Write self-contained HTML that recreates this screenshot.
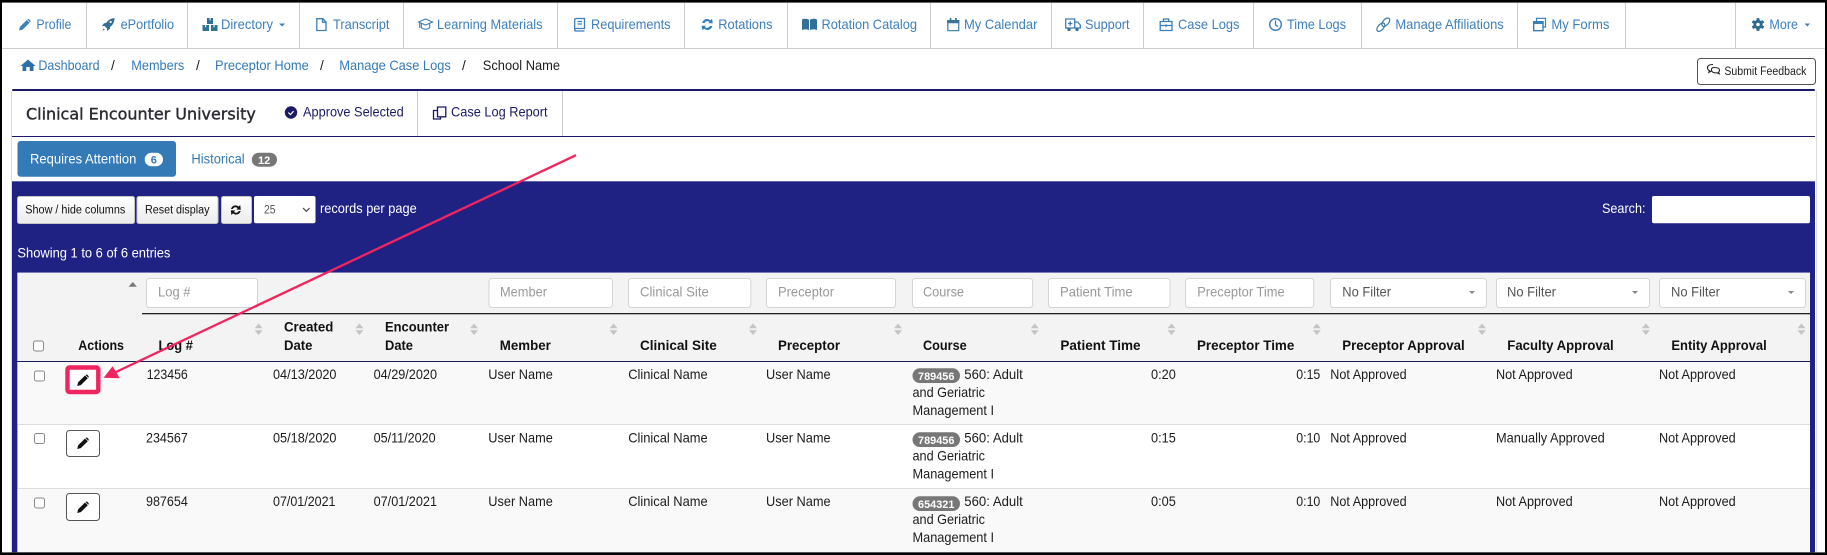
<!DOCTYPE html>
<html lang="en"><head><meta charset="utf-8"><title>Manage Case Logs</title>
<style>
html,body{margin:0;padding:0;background:#fff;width:1827px;height:555px;overflow:hidden}
svg{display:block;filter:blur(.3px)}
text{font-family:"Liberation Sans",Arial,sans-serif;font-size:13.6px;white-space:pre}
.n{fill:#3d7fbd}.l{fill:#337ab7}.d{fill:#1c1c1c}.w{fill:#fff}.p{fill:#999}.b{fill:#111;font-weight:700}.v{fill:#1a1a66}.s{font-size:11.5px;fill:#222}
.bg{fill:#fff;font-weight:700;font-size:11px}
.ic{fill:none;stroke:#3a7fb8;stroke-width:1.3}.if{fill:#2f7199}
.inp{fill:#fff;stroke:#d4d4d4;stroke-width:1}
.so{fill:#c4c4c4}
.cb{fill:#fff;stroke:#8a8a8a;stroke-width:1}
.eb{fill:#fff;stroke:#555;stroke-width:1}
</style></head><body>
<svg xmlns="http://www.w3.org/2000/svg" width="1827" height="555" viewBox="0 0 1827 555">
<defs>
<path id="pen" d="M0 12 L.9 8.4 L7.8 1.5 L10.6 4.3 L3.6 11.1 Z M8.3 1 Q9.3 0 10.3 1 L11.1 1.8 Q12 2.8 11.1 3.8 Z"/>
<g id="sort"><path class="so" d="M0 4.7 L4 0 L8 4.7 Z M0 6.8 L8 6.8 L4 11.5 Z"/></g>
</defs>
<rect width="1827" height="555" fill="#fff"/>

<!-- nav -->
<rect x="2" y="48" width="1823" height="1" fill="#ccc"/>
<g fill="#ccc">
<rect x="86" y="3" width="1" height="45"/><rect x="187" y="3" width="1" height="45"/><rect x="299" y="3" width="1" height="45"/><rect x="403" y="3" width="1" height="45"/><rect x="557" y="3" width="1" height="45"/><rect x="684" y="3" width="1" height="45"/><rect x="787" y="3" width="1" height="45"/><rect x="930" y="3" width="1" height="45"/><rect x="1051" y="3" width="1" height="45"/><rect x="1143" y="3" width="1" height="45"/><rect x="1253" y="3" width="1" height="45"/><rect x="1361" y="3" width="1" height="45"/><rect x="1517" y="3" width="1" height="45"/><rect x="1625" y="3" width="1" height="45"/><rect x="1735" y="3" width="1" height="45"/>
</g>
<text class="n" x="36.4" y="29" textLength="35" lengthAdjust="spacingAndGlyphs">Profile</text>
<text class="n" x="120.6" y="29" textLength="53.5" lengthAdjust="spacingAndGlyphs">ePortfolio</text>
<text class="n" x="221" y="29" textLength="52" lengthAdjust="spacingAndGlyphs">Directory</text>
<text class="n" x="333" y="29" textLength="56.5" lengthAdjust="spacingAndGlyphs">Transcript</text>
<text class="n" x="437" y="29" textLength="105.5" lengthAdjust="spacingAndGlyphs">Learning Materials</text>
<text class="n" x="591" y="29" textLength="79.5" lengthAdjust="spacingAndGlyphs">Requirements</text>
<text class="n" x="718.3" y="29" textLength="54.2" lengthAdjust="spacingAndGlyphs">Rotations</text>
<text class="n" x="821.5" y="29" textLength="95.5" lengthAdjust="spacingAndGlyphs">Rotation Catalog</text>
<text class="n" x="964" y="29" textLength="73.4" lengthAdjust="spacingAndGlyphs">My Calendar</text>
<text class="n" x="1085" y="29" textLength="44.6" lengthAdjust="spacingAndGlyphs">Support</text>
<text class="n" x="1178" y="29" textLength="61.5" lengthAdjust="spacingAndGlyphs">Case Logs</text>
<text class="n" x="1287" y="29" textLength="59" lengthAdjust="spacingAndGlyphs">Time Logs</text>
<text class="n" x="1395.4" y="29" textLength="108.4" lengthAdjust="spacingAndGlyphs">Manage Affiliations</text>
<text class="n" x="1551.4" y="29" textLength="58" lengthAdjust="spacingAndGlyphs">My Forms</text>
<text class="n" x="1769.4" y="29" textLength="28.6" lengthAdjust="spacingAndGlyphs">More</text>
<!-- nav icons -->
<use href="#pen" x="19" y="18.5" fill="#3a7fb8"/>
<path d="M114.5 18 Q109 18.5 106 23 L104 23.2 L102 26 L104.6 26 L107 28.6 L107 31 L110 28.8 L110 27 Q114.5 24 114.5 18 Z M103.5 28.5 L102.5 30.8 L104.8 29.8 Z" fill="#2f6f99"/>
<circle cx="110.6" cy="22" r="1.1" fill="#fff"/>
<path class="if" d="M207 18 h2.6 v2.4 h1 V18 H213 v6 h-6 Z M202.5 25 h2.6 v2.2 h1 V25 H209 v6 h-6.5 Z M211 25 h2.6 v2.2 h1 V25 h2.9 v6 H211 Z"/>
<path class="ic" d="M316.8 18.7 h6 l3.2 3.2 v8.6 h-9.2 Z M322.5 18.7 v3.5 h3.5"/>
<path d="M418.6 22 L425.5 19 L432.6 22 L425.5 25 Z M421.3 23.5 v4.2 q4.2 3 8.4 0 v-4.2 M419.7 22.5 v5.5" fill="none" stroke="#3a7fb8" stroke-width="1.1"/>
<path class="ic" d="M574.7 20 q0-1.5 1.5-1.5 h8.3 v10 h-8.3 q-1.5 0 -1.5 1.2 q0 1.3 1.5 1.3 h8.3 M574.7 30 v-10 M577.5 21.5 h4.5 M577.5 24 h4.5" fill="none"/>
<path d="M702.2 23 a5 5 0 0 1 8.3 -2.6 L712 18.8 L712.8 23.3 L708.3 23.3 L709.6 22 a3.3 3.3 0 0 0 -5.2 1 Z M712.3 26 a5 5 0 0 1 -8.3 2.6 L702.4 30.2 L701.6 25.7 L706.1 25.7 L704.8 27 a3.3 3.3 0 0 0 5.2 -1 Z" fill="#2f7fbb"/>
<path class="if" d="M802 19.5 Q805.5 18 809 19.6 V30 Q805.5 28.8 802 30 Z M810 19.6 Q813.5 18 817 19.5 V30 Q813.5 28.8 810 30 Z"/>
<path d="M947.8 20.6 h10.9 v10 h-10.9 Z" fill="none" stroke="#4a86ad" stroke-width="1.3"/><path d="M947.2 20 h12 v3.3 h-12 Z M949.7 18 h1.7 v3 h-1.7 Z M955.1 18 h1.7 v3 h-1.7 Z" fill="#3a7599"/>
<path d="M1065.7 19 h9 v9 h-9 Z M1074.7 22 h3 l2.6 3 v3 h-5.6 Z M1068 23.5 h4.4 M1070.2 21.3 v4.4" fill="none" stroke="#3a7fb8" stroke-width="1.3"/><circle cx="1069" cy="29.5" r="1.6" fill="#2f7199"/><circle cx="1077" cy="29.5" r="1.6" fill="#2f7199"/>
<path d="M1160.2 21.5 h11.8 v9 h-11.8 Z M1163.5 21.5 v-2.5 h5.2 v2.5 M1160.2 25.5 h11.8" fill="none" stroke="#3a7fb8" stroke-width="1.3"/><rect x="1165" y="24.6" width="2.2" height="2" fill="#3a7fb8"/>
<circle cx="1275.5" cy="24.5" r="5.8" fill="none" stroke="#3a7fb8" stroke-width="1.4"/><path d="M1275.5 20.5 v4.4 l2.6 1.8" fill="none" stroke="#3a7fb8" stroke-width="1.3"/>
<g fill="none" stroke="#3f7ca8" stroke-width="1.2"><ellipse cx="1380.8" cy="27.2" rx="5" ry="2.8" transform="rotate(-48 1380.8 27.2)"/><ellipse cx="1385.8" cy="22.2" rx="5" ry="2.8" transform="rotate(-48 1385.8 22.2)"/></g>
<path d="M1533.7 21.7 h9.3 v9 h-9.3 Z" fill="none" stroke="#3a7fb8" stroke-width="1.4"/><rect x="1533.2" y="21" width="10.4" height="3" fill="#3a7fb8"/><path d="M1536.5 21 v-2.7 h9 v8.7 h-2.2" fill="none" stroke="#3a7fb8" stroke-width="1.2"/>
<g transform="translate(1758 24.5)" fill="#2a6a8f"><circle r="4.6"/><g><rect x="-1.5" y="-6.4" width="3" height="12.8" rx=".6"/><rect x="-1.5" y="-6.4" width="3" height="12.8" rx=".6" transform="rotate(60)"/><rect x="-1.5" y="-6.4" width="3" height="12.8" rx=".6" transform="rotate(120)"/></g><circle r="1.8" fill="#fff"/></g>
<path d="M279 23.5 h6 l-3 3 Z M1804.6 23.5 h5.4 l-2.7 3 Z" fill="#3d7fbd"/>

<!-- breadcrumb -->
<path d="M28 59.5 L20.5 66 L22.5 66 L22.5 71 L26.3 71 L26.3 67 L29.7 67 L29.7 71 L33.5 71 L33.5 66 L35.6 66 Z" fill="#2f6fa8"/>
<text class="l" x="38.4" y="70" textLength="61.2" lengthAdjust="spacingAndGlyphs">Dashboard</text>
<text class="d" x="111" y="70">/</text>
<text class="l" x="131.3" y="70" textLength="53" lengthAdjust="spacingAndGlyphs">Members</text>
<text class="d" x="196" y="70">/</text>
<text class="l" x="215" y="70" textLength="93.8" lengthAdjust="spacingAndGlyphs">Preceptor Home</text>
<text class="d" x="320" y="70">/</text>
<text class="l" x="339.3" y="70" textLength="111.5" lengthAdjust="spacingAndGlyphs">Manage Case Logs</text>
<text class="d" x="462" y="70">/</text>
<text class="d" x="482.8" y="70" textLength="77.2" lengthAdjust="spacingAndGlyphs">School Name</text>

<rect x="1697.5" y="58.5" width="118" height="26" rx="3" fill="#fff" stroke="#555"/>
<path d="M1713 64.5 q-5.5 0 -5.5 3.2 q0 2 2 3 l-.6 1.6 l2.5 -1.3 M1714 67.5 q5.5 0 5.5 2.6 q0 1.5 -1 2.2 l.8 1.5 l-2.4 -1 q-5 .5 -5.5 -2.7 q0 -2.6 2.6 -2.6 Z" fill="none" stroke="#222" stroke-width="1.1"/>
<text class="s" x="1724.4" y="75" textLength="82" lengthAdjust="spacingAndGlyphs">Submit Feedback</text>

<!-- card -->
<rect x="11" y="91" width="1" height="462" fill="#ddd"/><rect x="1816" y="91" width="1" height="462" fill="#ddd"/>
<rect x="12" y="89" width="1803" height="2" rx="1" fill="#1a1a66"/>
<rect x="12" y="136" width="1803" height="1" fill="#1a1a66"/>
<rect x="417" y="91" width="1" height="45" fill="#ccc"/><rect x="562" y="91" width="1" height="45" fill="#ccc"/>
<text x="26" y="119.3" textLength="229.8" lengthAdjust="spacingAndGlyphs" style="font-family:'DejaVu Sans',sans-serif;font-size:16px;fill:#2b2b33;stroke:#2b2b33;stroke-width:.4">Clinical Encounter University</text>
<circle cx="291" cy="112.5" r="6.2" fill="#1a1a66"/><path d="M288.4 112.6 l2 2 l3.2 -3.4" fill="none" stroke="#fff" stroke-width="1.2"/>
<text class="v" x="303" y="116.7" textLength="100.7" lengthAdjust="spacingAndGlyphs">Approve Selected</text>
<path d="M437 110.5 h-3.5 v8.5 h7 v-2.2 M437.5 107 h8.3 v9.8 h-8.3 Z" fill="none" stroke="#1a1a66" stroke-width="1.3"/>
<text class="v" x="451" y="116.7" textLength="96.6" lengthAdjust="spacingAndGlyphs">Case Log Report</text>

<!-- tabs -->
<rect x="17.5" y="141" width="158.5" height="35.7" rx="3" fill="#337ab7"/>
<text class="w" x="30" y="163.3" textLength="106.4" lengthAdjust="spacingAndGlyphs">Requires Attention</text>
<rect x="144.7" y="152.7" width="18.3" height="13.6" rx="6.8" fill="#fff"/>
<text x="150.8" y="163.6" style="font-size:11px;font-weight:700;fill:#337ab7">6</text>
<text class="l" x="191.4" y="163.3" textLength="53.3" lengthAdjust="spacingAndGlyphs">Historical</text>
<rect x="251.8" y="152.7" width="25.2" height="14" rx="7" fill="#777"/>
<text class="bg" x="258" y="163.8">12</text>

<!-- navy panel -->
<rect x="12" y="181.3" width="1803" height="371" fill="#1f2183"/>
<defs><linearGradient id="g" x1="0" y1="0" x2="0" y2="1"><stop offset="0" stop-color="#fff"/><stop offset="1" stop-color="#ebebeb"/></linearGradient></defs>
<g fill="url(#g)" stroke="#c5c5c5">
<rect x="17.5" y="196.5" width="117" height="27" rx="2"/><rect x="137" y="196.5" width="81" height="27" rx="2"/><rect x="221.5" y="196.5" width="30" height="27" rx="2"/>
</g>
<text class="s" x="25.3" y="213.3" textLength="100" lengthAdjust="spacingAndGlyphs" style="fill:#111">Show / hide columns</text>
<text class="s" x="145" y="213.3" textLength="64.5" lengthAdjust="spacingAndGlyphs" style="fill:#111">Reset display</text>
<path d="M231 209 a4.6 4.6 0 0 1 7.6 -2.4 L240.2 205 L240.8 209.6 L236.4 209.6 L237.6 208.2 a2.9 2.9 0 0 0 -4.8 .8 Z M240.6 211 a4.6 4.6 0 0 1 -7.6 2.4 L231.4 215 L230.8 210.4 L235.2 210.4 L234 211.8 a2.9 2.9 0 0 0 4.8 -.8 Z" fill="#111"/>
<rect x="254" y="196" width="61.5" height="27.3" rx="2" fill="#fff"/>
<text x="264" y="213.3" textLength="11.6" lengthAdjust="spacingAndGlyphs" style="font-size:12px;fill:#555">25</text>
<path d="M303 208 l3.3 3.3 l3.3 -3.3" fill="none" stroke="#444" stroke-width="1.2"/>
<text class="w" x="320" y="213" textLength="96.7" lengthAdjust="spacingAndGlyphs">records per page</text>
<text class="w" x="1602" y="213" textLength="43.5" lengthAdjust="spacingAndGlyphs">Search:</text>
<rect x="1652" y="196" width="158" height="27.3" rx="2" fill="#fff"/>
<text class="w" x="17.4" y="257.7" textLength="153" lengthAdjust="spacingAndGlyphs">Showing 1 to 6 of 6 entries</text>

<!-- table -->
<rect x="17.4" y="272.7" width="1792.6" height="279.5" fill="#fff"/>
<rect x="17.4" y="272.7" width="1792.6" height="88.6" fill="#f3f3f3"/>
<rect x="17.4" y="361.8" width="1792.6" height="62.5" fill="#f9f9f9"/>
<rect x="17.4" y="488.7" width="1792.6" height="63.5" fill="#f9f9f9"/>
<rect x="17.4" y="424" width="1792.6" height="1" fill="#ddd"/><rect x="17.4" y="488" width="1792.6" height="1" fill="#ddd"/>
<rect x="142" y="313" width="1668" height="1.3" fill="#222"/>
<rect x="17.4" y="361" width="1792.6" height="1" fill="#1a1a55"/>
<path d="M128.5 286.7 L132.8 282 L137 286.7 Z" fill="#777"/>

<!-- filters -->
<rect class="inp" x="146.5" y="278.5" width="111" height="29" rx="3"/>
<rect class="inp" x="489" y="278.5" width="123.5" height="29" rx="3"/>
<rect class="inp" x="628.5" y="278.5" width="122.3" height="29" rx="3"/>
<rect class="inp" x="766.5" y="278.5" width="129" height="29" rx="3"/>
<rect class="inp" x="912.5" y="278.5" width="120.2" height="29" rx="3"/>
<rect class="inp" x="1048.5" y="278.5" width="121.5" height="29" rx="3"/>
<rect class="inp" x="1185.5" y="278.5" width="128.2" height="29" rx="3"/>
<rect class="inp" x="1330.5" y="278.5" width="156" height="29" rx="3"/>
<rect class="inp" x="1496.5" y="278.5" width="153" height="29" rx="3"/>
<rect class="inp" x="1659.5" y="278.5" width="146" height="29" rx="3"/>
<text class="p" x="158" y="296.7" textLength="32.5" lengthAdjust="spacingAndGlyphs">Log #</text>
<text class="p" x="500" y="296.7" textLength="47" lengthAdjust="spacingAndGlyphs">Member</text>
<text class="p" x="640" y="296.7" textLength="68.8" lengthAdjust="spacingAndGlyphs">Clinical Site</text>
<text class="p" x="778" y="296.7" textLength="56" lengthAdjust="spacingAndGlyphs">Preceptor</text>
<text class="p" x="923" y="296.7" textLength="41" lengthAdjust="spacingAndGlyphs">Course</text>
<text class="p" x="1060" y="296.7" textLength="72.7" lengthAdjust="spacingAndGlyphs">Patient Time</text>
<text class="p" x="1197.2" y="296.7" textLength="87.5" lengthAdjust="spacingAndGlyphs">Preceptor Time</text>
<text x="1342.3" y="296.7" textLength="48.7" lengthAdjust="spacingAndGlyphs" fill="#555">No Filter</text>
<text x="1507" y="296.7" textLength="49" lengthAdjust="spacingAndGlyphs" fill="#555">No Filter</text>
<text x="1671" y="296.7" textLength="49" lengthAdjust="spacingAndGlyphs" fill="#555">No Filter</text>
<path d="M1469 291 h6 l-3 3 Z M1632 291 h6 l-3 3 Z M1788 291 h6 l-3 3 Z" fill="#888"/>

<!-- headers -->
<rect class="cb" x="33.5" y="341" width="10" height="10" rx="2"/>
<text class="b" x="78.3" y="350" textLength="45.7" lengthAdjust="spacingAndGlyphs">Actions</text>
<text class="b" x="158.5" y="350" textLength="34.5" lengthAdjust="spacingAndGlyphs">Log #</text>
<text class="b" x="284" y="331.7" textLength="49.3" lengthAdjust="spacingAndGlyphs">Created</text>
<text class="b" x="284" y="350" textLength="28.4" lengthAdjust="spacingAndGlyphs">Date</text>
<text class="b" x="385" y="331.7" textLength="64" lengthAdjust="spacingAndGlyphs">Encounter</text>
<text class="b" x="385" y="350" textLength="28" lengthAdjust="spacingAndGlyphs">Date</text>
<text class="b" x="499.8" y="350" textLength="51" lengthAdjust="spacingAndGlyphs">Member</text>
<text class="b" x="640" y="350" textLength="76.8" lengthAdjust="spacingAndGlyphs">Clinical Site</text>
<text class="b" x="778" y="350" textLength="62" lengthAdjust="spacingAndGlyphs">Preceptor</text>
<text class="b" x="923" y="350" textLength="43.7" lengthAdjust="spacingAndGlyphs">Course</text>
<text class="b" x="1060.4" y="350" textLength="80.2" lengthAdjust="spacingAndGlyphs">Patient Time</text>
<text class="b" x="1197" y="350" textLength="97.3" lengthAdjust="spacingAndGlyphs">Preceptor Time</text>
<text class="b" x="1342.3" y="350" textLength="122.4" lengthAdjust="spacingAndGlyphs">Preceptor Approval</text>
<text class="b" x="1507.3" y="350" textLength="106.4" lengthAdjust="spacingAndGlyphs">Faculty Approval</text>
<text class="b" x="1671.4" y="350" textLength="95.3" lengthAdjust="spacingAndGlyphs">Entity Approval</text>
<use href="#sort" x="254.6" y="323.5"/><use href="#sort" x="355.4" y="323.5"/><use href="#sort" x="470" y="323.5"/><use href="#sort" x="609.6" y="323.5"/><use href="#sort" x="749" y="323.5"/><use href="#sort" x="894" y="323.5"/><use href="#sort" x="1030.7" y="323.5"/><use href="#sort" x="1167.5" y="323.5"/><use href="#sort" x="1312.8" y="323.5"/><use href="#sort" x="1478" y="323.5"/><use href="#sort" x="1641.9" y="323.5"/><use href="#sort" x="1797.5" y="323.5"/>

<!-- row 1 -->
<rect class="cb" x="34.5" y="371" width="10" height="10" rx="2"/>
<rect x="67.5" y="367.5" width="30.8" height="24.5" rx="2" fill="#fff" stroke="#f0245f" stroke-width="4.4"/>
<use href="#pen" x="77.2" y="374" fill="#111"/>
<text class="d" x="146.7" y="379" textLength="41.1" lengthAdjust="spacingAndGlyphs">123456</text>
<text class="d" x="273" y="379" textLength="63.5" lengthAdjust="spacingAndGlyphs">04/13/2020</text>
<text class="d" x="373.6" y="379" textLength="63.4" lengthAdjust="spacingAndGlyphs">04/29/2020</text>
<text class="d" x="488.3" y="379" textLength="64.5" lengthAdjust="spacingAndGlyphs">User Name</text>
<text class="d" x="628.2" y="379" textLength="79.5" lengthAdjust="spacingAndGlyphs">Clinical Name</text>
<text class="d" x="766" y="379" textLength="64.6" lengthAdjust="spacingAndGlyphs">User Name</text>
<rect x="912.5" y="368.3" width="47.5" height="14.7" rx="7.3" fill="#777"/>
<text class="bg" x="918" y="380" textLength="36.4" lengthAdjust="spacingAndGlyphs">789456</text>
<text class="d" x="964.3" y="379" textLength="58.5" lengthAdjust="spacingAndGlyphs">560: Adult</text>
<text class="d" x="912.5" y="397" textLength="72.5" lengthAdjust="spacingAndGlyphs">and Geriatric</text>
<text class="d" x="912.5" y="415" textLength="81.5" lengthAdjust="spacingAndGlyphs">Management I</text>
<text class="d" x="1151" y="379" textLength="24.8" lengthAdjust="spacingAndGlyphs">0:20</text>
<text class="d" x="1296.3" y="379" textLength="24" lengthAdjust="spacingAndGlyphs">0:15</text>
<text class="d" x="1330.3" y="379" textLength="76.3" lengthAdjust="spacingAndGlyphs">Not Approved</text>
<text class="d" x="1496" y="379" textLength="76.7" lengthAdjust="spacingAndGlyphs">Not Approved</text>
<text class="d" x="1659" y="379" textLength="76.7" lengthAdjust="spacingAndGlyphs">Not Approved</text>

<!-- row 2 -->
<rect class="cb" x="34.5" y="433.5" width="10" height="10" rx="2"/>
<rect class="eb" x="66.5" y="430.5" width="33" height="26" rx="3"/>
<use href="#pen" x="77.2" y="437" fill="#111"/>
<text class="d" x="146" y="442.7" textLength="41.8" lengthAdjust="spacingAndGlyphs">234567</text>
<text class="d" x="273" y="442.7" textLength="63.5" lengthAdjust="spacingAndGlyphs">05/18/2020</text>
<text class="d" x="373.6" y="442.7" textLength="62" lengthAdjust="spacingAndGlyphs">05/11/2020</text>
<text class="d" x="488.3" y="442.7" textLength="64.5" lengthAdjust="spacingAndGlyphs">User Name</text>
<text class="d" x="628.2" y="442.7" textLength="79.5" lengthAdjust="spacingAndGlyphs">Clinical Name</text>
<text class="d" x="766" y="442.7" textLength="64.6" lengthAdjust="spacingAndGlyphs">User Name</text>
<rect x="912.5" y="432.3" width="47.5" height="14.7" rx="7.3" fill="#777"/>
<text class="bg" x="918" y="444" textLength="36.4" lengthAdjust="spacingAndGlyphs">789456</text>
<text class="d" x="964.3" y="442.7" textLength="58.5" lengthAdjust="spacingAndGlyphs">560: Adult</text>
<text class="d" x="912.5" y="460.7" textLength="72.5" lengthAdjust="spacingAndGlyphs">and Geriatric</text>
<text class="d" x="912.5" y="478.7" textLength="81.5" lengthAdjust="spacingAndGlyphs">Management I</text>
<text class="d" x="1151" y="442.7" textLength="24.8" lengthAdjust="spacingAndGlyphs">0:15</text>
<text class="d" x="1296.3" y="442.7" textLength="24" lengthAdjust="spacingAndGlyphs">0:10</text>
<text class="d" x="1330.3" y="442.7" textLength="76.3" lengthAdjust="spacingAndGlyphs">Not Approved</text>
<text class="d" x="1496" y="442.7" textLength="108.8" lengthAdjust="spacingAndGlyphs">Manually Approved</text>
<text class="d" x="1659" y="442.7" textLength="76.7" lengthAdjust="spacingAndGlyphs">Not Approved</text>

<!-- row 3 -->
<rect class="cb" x="34.5" y="498" width="10" height="10" rx="2"/>
<rect class="eb" x="66.5" y="493.5" width="33" height="27" rx="3"/>
<use href="#pen" x="77.2" y="501" fill="#111"/>
<text class="d" x="146" y="506" textLength="41.8" lengthAdjust="spacingAndGlyphs">987654</text>
<text class="d" x="273" y="506" textLength="62.5" lengthAdjust="spacingAndGlyphs">07/01/2021</text>
<text class="d" x="373.6" y="506" textLength="63.4" lengthAdjust="spacingAndGlyphs">07/01/2021</text>
<text class="d" x="488.3" y="506" textLength="64.5" lengthAdjust="spacingAndGlyphs">User Name</text>
<text class="d" x="628.2" y="506" textLength="79.5" lengthAdjust="spacingAndGlyphs">Clinical Name</text>
<text class="d" x="766" y="506" textLength="64.6" lengthAdjust="spacingAndGlyphs">User Name</text>
<rect x="912.5" y="496.3" width="47.5" height="14.7" rx="7.3" fill="#777"/>
<text class="bg" x="918" y="508" textLength="36.4" lengthAdjust="spacingAndGlyphs">654321</text>
<text class="d" x="964.3" y="506" textLength="58.5" lengthAdjust="spacingAndGlyphs">560: Adult</text>
<text class="d" x="912.5" y="524" textLength="72.5" lengthAdjust="spacingAndGlyphs">and Geriatric</text>
<text class="d" x="912.5" y="542" textLength="81.5" lengthAdjust="spacingAndGlyphs">Management I</text>
<text class="d" x="1151" y="506" textLength="24.8" lengthAdjust="spacingAndGlyphs">0:05</text>
<text class="d" x="1296.3" y="506" textLength="24" lengthAdjust="spacingAndGlyphs">0:10</text>
<text class="d" x="1330.3" y="506" textLength="76.3" lengthAdjust="spacingAndGlyphs">Not Approved</text>
<text class="d" x="1496" y="506" textLength="76.7" lengthAdjust="spacingAndGlyphs">Not Approved</text>
<text class="d" x="1659" y="506" textLength="76.7" lengthAdjust="spacingAndGlyphs">Not Approved</text>

<!-- arrow -->
<path d="M576 155.2 L116 372" fill="none" stroke="#f0245f" stroke-width="2.3"/>
<path d="M103.6 377.8 L112.6 366.3 L119.8 378.3 Z" fill="#f0245f"/>

<!-- black frame -->
<rect x="0" y="0" width="1827" height="2.6" fill="#000"/>
<rect x="0" y="552.4" width="1827" height="2.6" fill="#000"/>
<rect x="0" y="0" width="2" height="555" fill="#000"/>
<rect x="1825" y="0" width="2" height="555" fill="#000"/>
</svg>
</body></html>
